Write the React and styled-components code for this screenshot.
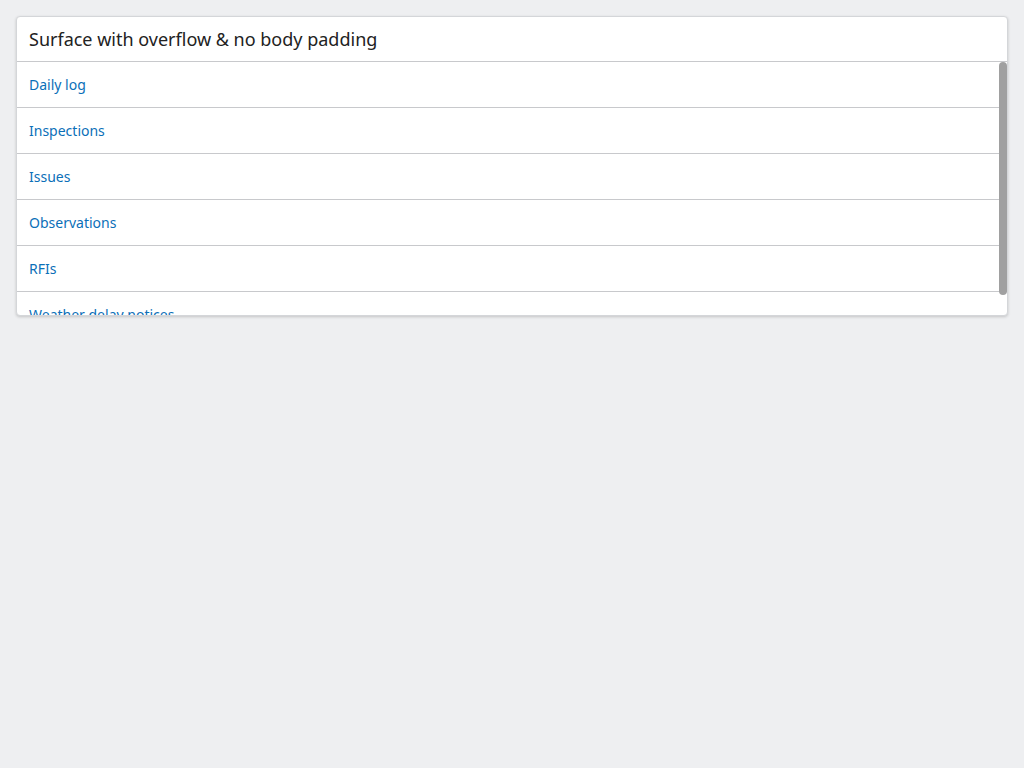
import React from "react";
import styled, { createGlobalStyle } from "styled-components";

const GlobalStyle = createGlobalStyle`
  html, body {
    margin: 0;
    padding: 0;
    background: #eeeff1;
    font-family: "Noto Sans", "Open Sans", sans-serif;
  }
  * {
    box-sizing: border-box;
  }
`;

const Page = styled.div`
  padding: 16px;
`;

const Surface = styled.section`
  position: relative;
  display: flex;
  flex-direction: column;
  height: 300px;
  background: #ffffff;
  border: 1px solid #d4d6d9;
  border-radius: 4px;
  box-shadow: 0 1px 3px rgba(0, 0, 0, 0.18);
  overflow: hidden;
`;

const Header = styled.header`
  padding: 12px;
  font-size: 18px;
  line-height: 20px;
  color: #222222;
  border-bottom: 1px solid #c8c9cc;
`;

const Body = styled.div`
  position: relative;
  flex: 1;
  overflow-y: auto;
  scrollbar-width: none;

  &::-webkit-scrollbar {
    display: none;
  }
`;

const ScrollThumb = styled.div`
  position: absolute;
  right: 0;
  top: 45px;
  width: 8px;
  border-radius: 4px;
  background: #a0a0a0;
`;

const List = styled.ul`
  list-style: none;
  margin: 0;
  padding: 0;
`;

const Row = styled.li`
  padding: 12px;
  font-size: 14px;
  line-height: 21px;
  border-bottom: 1px solid #c8c9cc;
  &:last-child {
    border-bottom: none;
  }
`;

const Link = styled.a`
  color: #0b6fb8;
  text-decoration: none;
  cursor: pointer;
`;

const items = [
  "Daily log",
  "Inspections",
  "Issues",
  "Observations",
  "RFIs",
  "Weather delay notices",
];

export default function App() {
  const visible = 253;
  const content = items.length * 46 - 1;
  const thumbHeight = Math.round((visible * visible) / content);

  return (
    <Page>
      <GlobalStyle />
      <Surface>
        <Header>Surface with overflow &amp; no body padding</Header>
        <Body>
          <List>
            {items.map((item) => (
              <Row key={item}>
                <Link href="#">{item}</Link>
              </Row>
            ))}
          </List>
        </Body>
        <ScrollThumb style={{ height: thumbHeight }} />
      </Surface>
    </Page>
  );
}
